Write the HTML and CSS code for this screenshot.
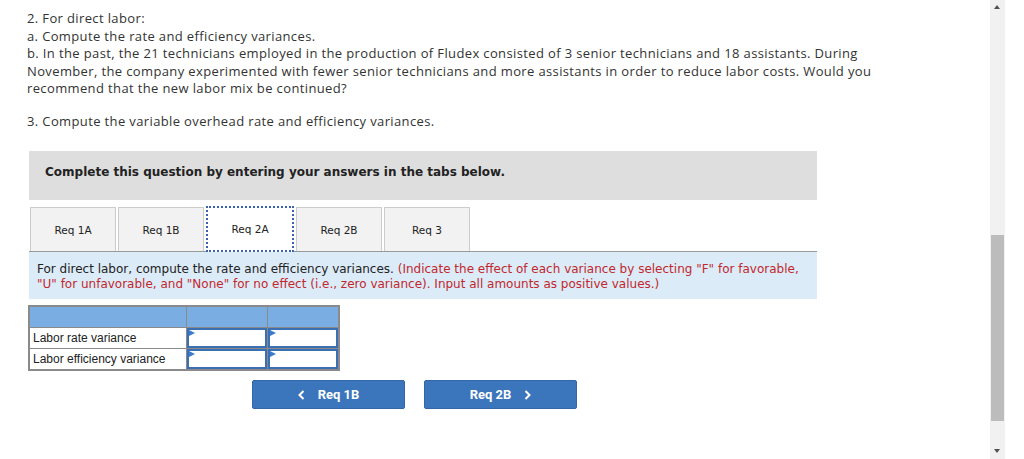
FILE: index.html
```html
<!DOCTYPE html>
<html>
<head>
<meta charset="utf-8">
<link rel="stylesheet" href="styles.css">
</head>
<body>
<div class="page">
  <div class="main">
    <div class="question">
      <p>2. For direct labor:<br>a. Compute the rate and efficiency variances.<br>b. In the past, the 21 technicians employed in the production of Fludex consisted of 3 senior technicians and 18 assistants. During<br>November, the company experimented with fewer senior technicians and more assistants in order to reduce labor costs. Would you<br>recommend that the new labor mix be continued?</p>
      <p class="q3">3. Compute the variable overhead rate and efficiency variances.</p>
    </div>
    <div class="widget">
      <div class="instr">Complete this question by entering your answers in the tabs below.</div>
      <div class="tabs">
        <div class="tab">Req 1A</div>
        <div class="tab">Req 1B</div>
        <div class="tab active">Req 2A</div>
        <div class="tab">Req 2B</div>
        <div class="tab">Req 3</div>
      </div>
      <div class="info">For direct labor, compute the rate and efficiency variances. <span class="red">(Indicate the effect of each variance by selecting "F" for favorable, "U" for unfavorable, and "None" for no effect (i.e., zero variance). Input all amounts as positive values.)</span></div>
      <table class="grid">
        <tr class="head"><td class="c1"></td><td class="c2"></td><td class="c3"></td></tr>
        <tr><td class="label">Labor rate variance</td><td class="in"><div class="box"></div></td><td class="in"><div class="box"></div></td></tr>
        <tr><td class="label">Labor efficiency variance</td><td class="in"><div class="box"></div></td><td class="in"><div class="box"></div></td></tr>
      </table>
      <div class="nav">
        <div class="btn"><svg class="chev" width="7" height="10" viewBox="0 0 7 10"><polyline points="5.5,1 1.5,5 5.5,9" fill="none" stroke="#fff" stroke-width="2"/></svg><span>Req 1B</span></div>
        <div class="btn"><span>Req 2B</span><svg class="chev" width="7" height="10" viewBox="0 0 7 10"><polyline points="1.5,1 5.5,5 1.5,9" fill="none" stroke="#fff" stroke-width="2"/></svg></div>
      </div>
    </div>
  </div>
  <div class="scrollbar">
    <div class="arrow up"></div>
    <div class="track"><div class="thumb"></div></div>
    <div class="arrow down"></div>
  </div>
</div>
</body>
</html>
```
FILE: styles.css
```css
html, body { margin: 0; padding: 0; background: #fff; }
.page { display: flex; width: 1024px; height: 459px; overflow: hidden; }
.main { width: 990px; flex: 0 0 990px; padding: 0 0 0 27px; box-sizing: border-box; }
.question { font-family: "Open Sans", Lato, sans-serif; font-size: 13px; letter-spacing: 0.37px; line-height: 17.5px; color: #333; padding-top: 10px; }
.question p { margin: 0; }
.question .q3 { margin-top: 15px; }
.widget { margin-left: 2px; width: 788px; margin-top: 21px; }
.instr { background: #dedede; height: 49px; display: flex; align-items: flex-start; padding: 14px 0 0 16px; font-family: "DejaVu Sans", Verdana, sans-serif; font-weight: bold; font-size: 12px; color: #222; box-sizing: border-box; }
.tabs { display: flex; gap: 2px; margin-top: 7px; padding-left: 1px; border-bottom: 1px solid #999; height: 44px; }
.tab { width: 86px; height: 44px; box-sizing: border-box; background: #f2f2f2; border: 1px solid #ccc; border-bottom: none; display: flex; align-items: center; justify-content: center; font-family: "DejaVu Sans", Verdana, sans-serif; font-size: 10.5px; color: #222; }
.tab.active { width: 88px; height: 46px; background: #fff; border: 2px dotted #3a62b0; margin-top: -1px; position: relative; z-index: 1; }
.info { background: #dcebf8; height: 47px; box-sizing: border-box; padding: 10px 8px 0 8px; font-family: "DejaVu Sans", Verdana, sans-serif; font-size: 12px; line-height: 15px; color: #222; }
.info .red { color: #c1282d; }
.grid { border-collapse: collapse; margin-top: 6px; margin-left: -1px; border: 2px solid #8a8a8a; }
.grid td { padding: 0; border: 1px solid #8a8a8a; }
.grid .head td { background: #7aaee3; height: 20px; }
.grid .c1 { width: 156px; }
.grid .c2 { width: 80px; }
.grid .c3 { width: 70px; }
.grid .label { font-family: "Liberation Sans", Arial, sans-serif; font-size: 12px; color: #222; height: 20px; padding-left: 3px; }
.grid .in { padding: 0; height: 20px; }
.box { position: relative; height: 20px; box-sizing: border-box; border: 2px solid #3a6fb3; background: #fff; }
.box::before { content: ""; position: absolute; left: 0; top: 0; border-left: 6px solid #3a7bd0; border-top: 3px solid transparent; border-bottom: 3px solid transparent; }
.nav { display: flex; gap: 19px; margin-top: 9px; padding-left: 223px; }
.btn { width: 153px; height: 29px; background: #3b75bb; border: 1px solid #3567a8; box-sizing: border-box; border-radius: 2px; color: #fff; font-family: Roboto, "Liberation Sans", sans-serif; font-weight: bold; font-size: 13px; display: flex; align-items: center; justify-content: center; gap: 13px; }
.chev { display: block; }
.scrollbar { width: 15px; flex: 0 0 15px; background: #f1f1f1; display: flex; flex-direction: column; }
.arrow { height: 17px; position: relative; }
.arrow.up::after { content: ""; position: absolute; left: 4px; top: 5px; border-left: 3.5px solid transparent; border-right: 3.5px solid transparent; border-bottom: 4px solid #505050; }
.arrow.down::after { content: ""; position: absolute; left: 4px; top: 7px; border-left: 3.5px solid transparent; border-right: 3.5px solid transparent; border-top: 4px solid #505050; }
.track { flex: 1; position: relative; }
.thumb { position: absolute; left: 1px; right: 1px; top: 218px; height: 186px; background: #bcbcbc; }
```
